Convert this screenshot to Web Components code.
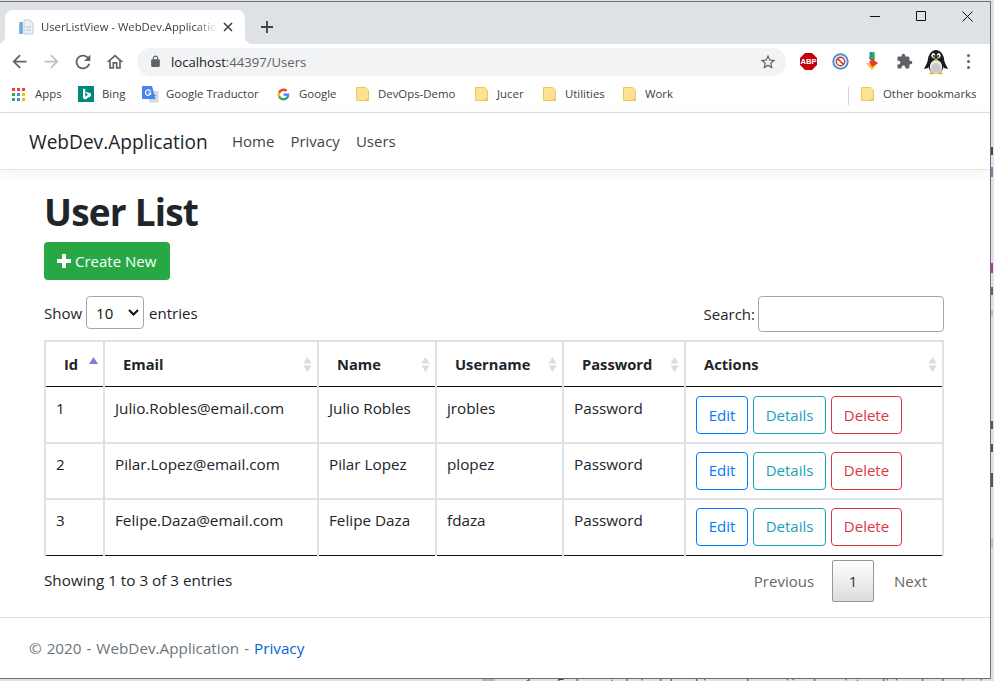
<!DOCTYPE html>
<html lang="en">
<head>
<meta charset="utf-8">
<title>UserListView - WebDev.Application</title>
<style>
html,body{margin:0;padding:0;background:#e6e6e6;overflow:hidden}
body{width:994px;height:681px;position:relative;font-family:"Open Sans","Liberation Sans",sans-serif}
</style>
</head>
<body>
<desk-backdrop></desk-backdrop>
<browser-window>
  <browser-chrome></browser-chrome>
  <site-navbar brand="WebDev.Application"></site-navbar>
  <users-page></users-page>
  <site-footer></site-footer>
</browser-window>
<script>
const define=(name,css,html)=>{
  customElements.define(name,class extends HTMLElement{
    connectedCallback(){
      if(this.shadowRoot)return;
      const r=this.attachShadow({mode:'open'});
      const h=typeof html==='function'?html(this):html;
      r.innerHTML=`<style>${css}</style>${h}`;
    }
  });
};

define('desk-backdrop',`
:host{position:absolute;inset:0;display:block;overflow:hidden;background:#e2e2e2;color:#333}
i{position:absolute;left:991px;width:2px;display:block}
p{position:absolute;margin:0;left:557px;top:674px;font:13px "Open Sans",sans-serif;white-space:nowrap;color:#444}
b{position:absolute;left:482px;top:679px;width:13px;height:2px;background:#b5b5b5}
em{position:absolute;left:525px;top:674px;font:normal 13px "Open Sans",sans-serif;color:#555}
`,`
<i style="top:147px;height:8px;background:#4a4a5a"></i>
<i style="top:167px;height:10px;background:#8a7ab8"></i>
<i style="top:263px;height:10px;background:#a040a0"></i>
<i style="top:287px;height:8px;background:#8a5a50"></i>
<i style="top:310px;height:6px;background:#d8b898"></i>
<i style="top:421px;height:8px;background:#555"></i>
<i style="top:444px;height:8px;background:#555"></i>
<i style="top:473px;height:14px;background:#555"></i>
<i style="top:538px;height:10px;background:#d8b8c8"></i>
<b></b><em>1.</em>
<p>En la parte baja del archivo, en la sección de scripts adicionales la siguiente línea</p>
`);

define('browser-window',`
:host{position:absolute;left:0;top:1px;width:990px;height:676px;display:flex;flex-direction:column;background:#fff;
border-top:1px solid #6e6e6e;border-right:1px solid #6e6e6e;border-bottom:1px solid #6e6e6e;overflow:hidden}
`,`<slot></slot>`);

const ic={
 back:'M20 11H7.83l5.59-5.59L12 4l-8 8 8 8 1.41-1.41L7.83 13H20v-2z',
 fwd:'M12 4l-1.41 1.41L16.17 11H4v2h12.17l-5.58 5.59L12 20l8-8z',
 reload:'M17.65 6.35C16.2 4.9 14.21 4 12 4c-4.42 0-7.99 3.58-7.99 8s3.57 8 7.99 8c3.73 0 6.84-2.55 7.73-6h-2.08c-.82 2.33-3.04 4-5.65 4-3.31 0-6-2.69-6-6s2.69-6 6-6c1.66 0 3.14.69 4.22 1.78L13 11h7V4l-2.35 2.35z',
 home:'M12 5.69l5 4.5V18h-2v-6H9v6H7v-7.81l5-4.5M12 3L2 12h3v8h6v-6h2v6h6v-8h3L12 3z',
 lock:'M18 8h-1V6c0-2.76-2.24-5-5-5S7 3.24 7 6v2H6c-1.1 0-2 .9-2 2v10c0 1.1.9 2 2 2h12c1.1 0 2-.9 2-2V10c0-1.1-.9-2-2-2zM9 6c0-1.66 1.34-3 3-3s3 1.34 3 3v2H9V6z',
 star:'M22 9.24l-7.19-.62L12 2 9.19 8.63 2 9.24l5.46 4.73L5.82 21 12 17.27 18.18 21l-1.63-7.03L22 9.24zM12 15.4l-3.76 2.27 1-4.28-3.32-2.88 4.38-.38L12 6.1l1.71 4.04 4.38.38-3.32 2.88 1 4.28L12 15.4z',
 puzzle:'M20.5 11H19V7c0-1.1-.9-2-2-2h-4V3.5C13 2.12 11.88 1 10.5 1S8 2.12 8 3.5V5H4c-1.1 0-1.99.9-1.99 2v3.8H3.5c1.49 0 2.7 1.21 2.7 2.7s-1.21 2.7-2.7 2.7H2V20c0 1.1.9 2 2 2h3.8v-1.5c0-1.49 1.21-2.7 2.7-2.7 1.49 0 2.7 1.21 2.7 2.7V22H17c1.1 0 2-.9 2-2v-4h1.5c1.38 0 2.5-1.12 2.5-2.5S21.88 11 20.5 11z'
};
const mi=(k,s,c)=>`<svg width="${s}" height="${s}" viewBox="0 0 24 24" fill="${c}" style="flex:none"><path d="${ic[k]}"/></svg>`;
const folder=`<svg width="13" height="14" viewBox="0 0 13 14"><path d="M.5.5h9.2l2.8 2.8v10.2H.5z" fill="#fde293" stroke="#f0c654"/><path d="M10 12.500h2.500" stroke="#f0c654" stroke-width="2"/></svg>`;
const apps=(()=>{const c=['#ea4335','#ea4335','#ea4335','#34a853','#4285f4','#fbbc05','#34a853','#4285f4','#fbbc05'];let s='';c.forEach((f,i)=>{s+=`<rect x="${(i%3)*5}" y="${Math.floor(i/3)*5}" width="3" height="3" fill="${f}"/>`});return `<svg width="13" height="13" viewBox="0 0 13 13">${s}</svg>`})();
const bing=`<svg width="16" height="16" viewBox="0 0 16 16"><rect width="16" height="16" fill="#00897b"/><path d="M5 2.500l2.300.8v7.200l3-1.700-1.500-.7-.9-2.300 5 1.800v2.400L7.300 13.500 5 12.200z" fill="#fff"/></svg>`;
const trans=`<svg width="17" height="17" viewBox="0 0 17 17"><path d="M7 5h9.500v11.500H7z" fill="#d5d8dc"/><path d="M11.500 7.500l-1 5.500M9 9.500h5" stroke="#7f8a96" stroke-width="1" fill="none"/><path d="M1 0h9l3.500 13H1a1 1 0 0 1-1-1V1a1 1 0 0 1 1-1z" fill="#4285f4"/><path d="M8.600 5.400A2.700 2.700 0 1 0 8.800 7.200H6.400" fill="none" stroke="#fff" stroke-width="1.2"/></svg>`;
const gg=`<svg width="13" height="13" viewBox="0 0 24 24"><path fill="#4285F4" d="M22.56 12.25c0-.78-.07-1.53-.2-2.25H12v4.26h5.92c-.26 1.37-1.04 2.53-2.21 3.31v2.77h3.57c2.08-1.92 3.28-4.74 3.28-8.09z"/><path fill="#34A853" d="M12 23c2.97 0 5.46-.98 7.28-2.66l-3.57-2.77c-.98.66-2.23 1.06-3.71 1.06-2.86 0-5.29-1.93-6.16-4.53H2.18v2.84C3.99 20.53 7.7 23 12 23z"/><path fill="#FBBC05" d="M5.84 14.09c-.22-.66-.35-1.36-.35-2.09s.13-1.43.35-2.09V7.07H2.18C1.43 8.55 1 10.22 1 12s.43 3.45 1.18 4.93l3.66-2.84z"/><path fill="#EA4335" d="M12 5.38c1.62 0 3.06.56 4.21 1.64l3.15-3.15C17.45 2.09 14.97 1 12 1 7.7 1 3.99 3.47 2.18 7.07l3.66 2.84c.87-2.6 3.3-4.53 6.16-4.53z"/></svg>`;
const abp=`<svg width="17" height="17" viewBox="0 0 17 17"><path d="M5 0h7l5 5v7l-5 5H5l-5-5V5z" fill="#c4000c"/><text x="8.500" y="11.200" text-anchor="middle" font-family="Liberation Sans" font-weight="700" font-size="7.600" fill="#fff">ABP</text></svg>`;
const block=`<svg width="17" height="17" viewBox="0 0 17 17"><circle cx="8.500" cy="8.500" r="7.200" fill="#fff" stroke="#4a90d9" stroke-width="2"/><circle cx="8.500" cy="8.500" r="4.200" fill="none" stroke="#c0392b" stroke-width="1.400"/><path d="M5.500 5.500l6 6" stroke="#c0392b" stroke-width="1.600"/></svg>`;
const dl=`<svg width="12" height="19" viewBox="0 0 12 19"><path d="M3.500 0H6v7H3.500z" fill="#2f7de1"/><path d="M6 0h2.500v7H6z" fill="#34a853"/><path d="M3.500 4L8.500 2v5H3.500z" fill="#34a853"/><path d="M3.500 7H8.500V10H6z" fill="#e53935"/><path d="M0 11h12l-6 7z" fill="#fbc02d"/><path d="M3 9h6l3 2-6 4z" fill="#e53935"/></svg>`;
const penguin=`<svg width="26" height="28" viewBox="0 0 26 28"><ellipse cx="13" cy="14" rx="8.500" ry="12" fill="#1b1b1b"/><path d="M5 13L1 21l4-1zM21 13l4 8-4-1z" fill="#1b1b1b"/><ellipse cx="13" cy="19" rx="6.200" ry="7" fill="#e8e8e8"/><ellipse cx="13" cy="20" rx="4.500" ry="5" fill="#c9c9c9"/><ellipse cx="10.300" cy="7.500" rx="2" ry="2.600" fill="#f2f2f2"/><ellipse cx="15.700" cy="7.500" rx="2" ry="2.600" fill="#f2f2f2"/><circle cx="10.800" cy="8" r=".9" fill="#111"/><circle cx="15.200" cy="8" r=".9" fill="#111"/><path d="M10.400 10.600h5.200L13 13z" fill="#e8a91c"/><path d="M6 25.500c1.500-1.800 4-1.800 5.300 0 .4.8-4.800 1-5.300 0zM14.700 25.500c1.300-1.800 3.800-1.800 5.300 0-.5 1-5.700.8-5.300 0z" fill="#e8b21c"/></svg>`;
const favicon=`<svg width="16" height="16" viewBox="0 0 16 16"><path d="M6 1h6l3 3v11H6z" fill="#eef1f4" stroke="#c3cad1"/><path d="M1 3h4v12H1z" fill="#8ec1e8"/><path d="M2.500 3h1.200v12H2.500z" fill="#4a98d8"/><path d="M8 8h5M8 11h5" stroke="#b8c0c8"/></svg>`;

define('book-mark',`
:host{display:flex;align-items:center;flex:none;color:#3c4043;font-size:11.4px;white-space:nowrap;height:20px}
.i{display:flex;align-items:center;justify-content:center;flex:none}
.t{position:relative;top:-2px}
`,h=>`<span class="i" style="width:${h.getAttribute('iw')}px"><slot name="icon"></slot></span><span class="t" style="margin-left:${h.getAttribute('tg')||10}px"><slot></slot></span>`);

define('browser-chrome',`
:host{display:block;flex:none;font-family:"Open Sans","Liberation Sans",sans-serif}
.strip{height:42px;background:#dee1e6;position:relative;display:flex;align-items:flex-end;padding-left:5px;box-sizing:border-box}
.tab{width:240px;height:34px;background:#fff;border-radius:8px 8px 0 0;display:flex;align-items:center;box-sizing:border-box;padding:0 0 1px 13px;position:relative}
.tab:before,.tab:after{content:"";position:absolute;bottom:0;width:8px;height:8px}
.tab:before{left:-8px;background:radial-gradient(circle at 0 0,transparent 8px,#fff 8.5px)}
.tab:after{right:-8px;background:radial-gradient(circle at 100% 0,transparent 8px,#fff 8.5px)}
.title{margin-left:7px;width:176px;font-size:11.3px;color:#3c4043;white-space:nowrap;overflow:hidden;-webkit-mask-image:linear-gradient(90deg,#000 88%,transparent);mask-image:linear-gradient(90deg,#000 88%,transparent)}
.x{margin-left:6px;display:flex}
.plus{margin-left:16px;margin-bottom:11px;display:flex}
.ctrl{position:absolute;right:0;top:0;display:flex}
.ctrl span{width:46px;height:28px;display:flex;align-items:center;justify-content:center}
.tools{height:35px;display:flex;align-items:center;background:#fff;padding-left:11px;box-sizing:border-box}
.tools .b{flex:none;width:16px;display:flex;align-items:center;justify-content:center;margin-right:16px}
.omni{width:649px;height:28px;border-radius:14px;background:#f1f3f4;margin-left:-2px;display:flex;align-items:center;box-sizing:border-box;padding-left:12px;flex:none}
.url{margin-left:9px;font-size:13.1px;color:#5f6368;flex:1}
.url b{font-weight:400;color:#202124}
.star{margin-right:9px;display:flex}
.ext{display:flex;align-items:center;margin-left:12px}
.ext span{width:32px;height:28px;display:flex;align-items:center;justify-content:center;flex:none}
.dots{display:flex;flex-direction:column;gap:3px;align-items:center}
.dots i{width:3px;height:3px;border-radius:50%;background:#5f6368;display:block}
.marks{height:33px;border-bottom:1px solid #dadce0;display:flex;align-items:center;padding-left:11px;box-sizing:content-box;background:#fff;position:relative}
.sep{width:1px;height:18px;background:#d5d7da;margin:0 12px 0 0;flex:none}
`,`
<div class="strip">
  <div class="tab">${favicon}<span class="title">UserListView - WebDev.Application</span>
    <span class="x"><svg width="10" height="10" viewBox="0 0 10 10"><path d="M1 1l8 8M9 1l-8 8" stroke="#3c4043" stroke-width="1.6"/></svg></span></div>
  <span class="plus"><svg width="12" height="12" viewBox="0 0 12 12"><path d="M6 0v12M0 6h12" stroke="#3c4043" stroke-width="1.8"/></svg></span>
  <div class="ctrl">
    <span><svg width="10" height="10" viewBox="0 0 10 10"><path d="M0 5.500h10" stroke="#111"/></svg></span>
    <span><svg width="10" height="10" viewBox="0 0 10 10"><path d="M.5.5h9v9h-9z" fill="none" stroke="#111"/></svg></span>
    <span><svg width="11" height="11" viewBox="0 0 11 11"><path d="M.5.5l10 10M10.500.5l-10 10" stroke="#111"/></svg></span>
  </div>
</div>
<div class="tools">
  <span class="b">${mi('back',21,'#5f6368')}</span>
  <span class="b">${mi('fwd',21,'#bdc1c6')}</span>
  <span class="b">${mi('reload',22,'#5f6368')}</span>
  <span class="b">${mi('home',20,'#5f6368')}</span>
  <div class="omni">${mi('lock',13,'#5f6368')}<span class="url"><b>localhost</b>:44397/Users</span><span class="star">${mi('star',18,'#5f6368')}</span></div>
  <div class="ext"><span style="margin-left:-6px">${abp}</span><span>${block}</span><span>${dl}</span><span>${mi('puzzle',17,'#5f6368')}</span><span>${penguin}</span><span><span class="dots"><i></i><i></i><i></i></span></span></div>
</div>
<div class="marks">
  <book-mark iw="14" tg="10" style="width:67px"><span slot="icon">${apps}</span>Apps</book-mark>
  <book-mark iw="16" tg="8" style="width:64px"><span slot="icon">${bing}</span>Bing</book-mark>
  <book-mark iw="17" tg="7" style="width:135px"><span slot="icon">${trans}</span>Google Traductor</book-mark>
  <book-mark iw="13" tg="9" style="width:79px"><span slot="icon">${gg}</span>Google</book-mark>
  <book-mark iw="13" tg="9" style="width:119px"><span slot="icon">${folder}</span>DevOps-Demo</book-mark>
  <book-mark iw="13" tg="9" style="width:68px"><span slot="icon">${folder}</span>Jucer</book-mark>
  <book-mark iw="13" tg="9" style="width:80px"><span slot="icon">${folder}</span>Utilities</book-mark>
  <book-mark iw="13" tg="9" style="width:225px"><span slot="icon">${folder}</span>Work</book-mark>
  <span class="sep"></span>
  <book-mark iw="13" tg="9"><span slot="icon">${folder}</span>Other bookmarks</book-mark>
</div>
`);

define('site-navbar',`
:host{display:flex;flex:none;align-items:center;height:56px;border-bottom:1px solid #e5e5e5;box-shadow:0 4px 12px rgba(0,0,0,.05);padding-left:29px;background:#fff;position:relative;z-index:1;color:#343a40}
.brand{font-size:19.1px;color:#212529;width:203px;flex:none;position:relative;top:.5px}
nav{display:flex;font-size:15px}
nav a{color:#40454a;text-decoration:none;margin-right:16px}
`,h=>`<span class="brand">${h.getAttribute('brand')}</span><nav><a>Home</a><a>Privacy</a><a>Users</a></nav>`);

define('action-btn',`
:host{display:inline-flex;box-sizing:border-box;height:38px;align-items:center;justify-content:center;border:1px solid var(--c);color:var(--c);border-radius:4px;font-size:15px;flex:none;background:#fff;padding-bottom:1px}
`,`<slot></slot>`);

define('sort-mark',`
:host{position:absolute;right:5px;top:15px;display:block;width:9px;height:15px;line-height:0}
`,h=>{
  const a=h.getAttribute('state');
  return a==='asc'
   ?`<svg width="9" height="15" viewBox="0 0 9 15"><path d="M0 7L4.500 0 9 7z" fill="#7b7fd9"/></svg>`
   :`<svg width="9" height="15" viewBox="0 0 9 15"><path d="M.5 6.500L4.500 0l4 6.500zM.5 8.500h8L4.500 15z" fill="#dcdcdc"/></svg>`;
});

const rows=[[1,'Julio.Robles@email.com','Julio Robles','jrobles'],[2,'Pilar.Lopez@email.com','Pilar Lopez','plopez'],[3,'Felipe.Daza@email.com','Felipe Daza','fdaza']];
define('users-table',`
:host{display:block;color:#212529}
table{border-collapse:collapse;table-layout:fixed;width:900px}
th,td{border:2px solid #dee2e6;box-sizing:border-box;text-align:left;font-size:15.25px;padding:0}
thead tr{height:45px}
th{position:relative;font-weight:700;padding-left:18px;border-top:2px solid #dee2e6;border-bottom:1px solid #111;font-size:14.7px}
tbody tr{height:56px}
tbody tr:first-child{height:57px}
td{vertical-align:top;padding:10px 10px 0}
tbody tr:first-child td{border-top:0;padding-top:11px}
tbody tr:last-child td{border-bottom:1px solid #111}
td.act{padding:7.500px 10px 0}
tbody tr:first-child td.act{padding-top:9.500px}
.acts{display:flex;gap:5px}
`,`
<table>
<colgroup><col style="width:59px"><col style="width:214px"><col style="width:118px"><col style="width:127px"><col style="width:122px"><col style="width:258px"></colgroup>
<thead><tr>
<th>Id<sort-mark state="asc"></sort-mark></th><th>Email<sort-mark></sort-mark></th><th>Name<sort-mark></sort-mark></th><th>Username<sort-mark></sort-mark></th><th>Password<sort-mark></sort-mark></th><th>Actions<sort-mark></sort-mark></th>
</tr></thead>
<tbody>${rows.map(r=>`<tr><td>${r[0]}</td><td>${r[1]}</td><td>${r[2]}</td><td>${r[3]}</td><td>Password</td><td class="act"><div class="acts">
<action-btn style="--c:#007bff;width:52px">Edit</action-btn><action-btn style="--c:#17a2b8;width:73px">Details</action-btn><action-btn style="--c:#dc3545;width:71px">Delete</action-btn></div></td></tr>`).join('')}</tbody>
</table>`);

define('users-page',`
:host{display:block;flex:1;box-sizing:border-box;padding:18px 46px 0 44px;color:#212529;font-size:15px;min-height:0}
h1{margin:0 0 6px;font-size:37px;line-height:48px;font-weight:700;letter-spacing:-.8px}
.create{display:inline-flex;align-items:center;height:38px;width:126px;box-sizing:border-box;background:#28a745;border-radius:4px;color:#fff;padding-left:13px;gap:4px;font-size:15px}
.ctl{display:flex;justify-content:space-between;align-items:flex-start;margin:16px 0 8px;height:36px}
.show{display:flex;align-items:center;height:33px}
.sel{position:relative;display:block;margin:0 5px 0 4px;width:58px;height:33px}
select{appearance:none;-webkit-appearance:none;width:58px;height:33px;box-sizing:border-box;border:1px solid #a6a6a6;border-radius:4px;background:#fff;font:15px "Open Sans",sans-serif;color:#111;padding-left:9px;display:block}
.sel svg{position:absolute;right:5px;top:13px;pointer-events:none}
.search{display:flex;align-items:center;height:36px}
input{width:186px;height:36px;box-sizing:border-box;border:1px solid #a6a6a6;border-radius:4px;margin-left:3px;background:#fff;display:block}
.foot{display:flex;justify-content:space-between;align-items:flex-start;padding-top:4px;height:42px}
.info{padding-top:10px;font-size:15.25px}
.pg{display:flex;align-items:center;height:42px;margin-right:17px;color:#666}
.cur{width:42px;height:42px;box-sizing:border-box;border:1px solid #979797;border-radius:2px;background:linear-gradient(#fff,#dcdcdc);display:flex;align-items:center;justify-content:center;margin:0 20px 0 18px;color:#333}
`,`
<h1>User List</h1>
<span class="create"><svg width="14" height="14" viewBox="0 0 14 14"><path d="M7 0v14M0 7h14" stroke="#fff" stroke-width="4"/></svg>Create New</span>
<div class="ctl">
  <label class="show">Show <span class="sel"><select><option>10</option><option>25</option></select><svg width="11" height="7" viewBox="0 0 11 7"><path d="M1 1l4.500 4.500L10 1" fill="none" stroke="#111" stroke-width="2"/></svg></span> entries</label>
  <label class="search">Search:<input type="search" aria-label="Search"></label>
</div>
<users-table></users-table>
<div class="foot"><span class="info">Showing 1 to 3 of 3 entries</span>
<div class="pg"><span>Previous</span><span class="cur">1</span><span>Next</span></div></div>
`);

define('site-footer',`
:host{display:flex;flex:none;align-items:center;height:61px;box-sizing:border-box;border-top:1px solid #dee2e6;padding:0 0 1px 29px;color:#6c757d;font-size:15.25px}
a{color:#0366d6;text-decoration:none}
span{white-space:pre;word-spacing:1px}
`,`<span>© 2020 - WebDev.Application - </span><a>Privacy</a>`);
</script>
</body>
</html>
